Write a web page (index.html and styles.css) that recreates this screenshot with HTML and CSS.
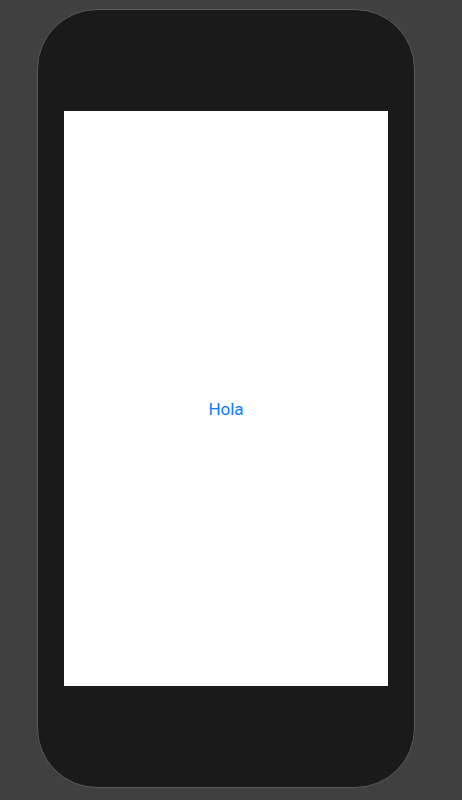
FILE: index.html
```html
<!DOCTYPE html>
<html lang="es">
<head>
<meta charset="utf-8">
<meta name="viewport" content="width=device-width, initial-scale=1">
<title>Hola</title>
<link rel="stylesheet" href="styles.css">
</head>
<body>
<main class="phone">
  <div class="screen">
    <button class="greeting" type="button">Hola</button>
  </div>
</main>
</body>
</html>
```
FILE: styles.css
```css
* {
  box-sizing: border-box;
}

body {
  display: flex;
  min-height: 100vh;
  margin: 0;
  padding: 9px 47px 12px 37px;
  background: #404040;
  font-family: Roboto, "Liberation Sans", sans-serif;
}

.phone {
  display: flex;
  flex: 1;
  padding: 101px 26px;
  border: 1px solid #5a5a5a;
  border-radius: 60px;
  background: #1a1a1a;
}

.screen {
  display: flex;
  flex: 1;
  align-items: center;
  justify-content: center;
  padding-top: 20px;
  background: #fff;
}

.greeting {
  padding: 0;
  border: 0;
  background: none;
  color: #087cff;
  font: inherit;
  font-size: 17px;
  line-height: 24px;
  cursor: pointer;
}
```
